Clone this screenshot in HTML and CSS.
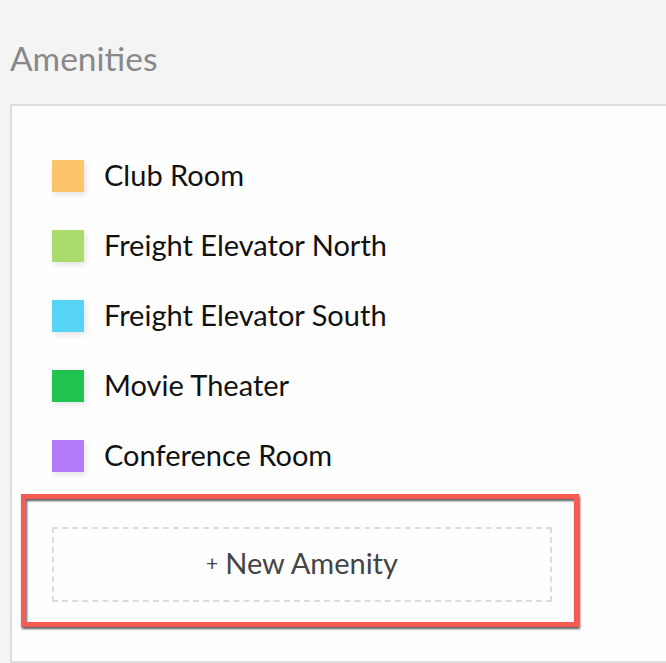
FILE: index.html
```html
<!DOCTYPE html>
<html>
<head>
<meta charset="utf-8">
<link rel="stylesheet" href="styles.css">
</head>
<body>
<div class="page">
  <h1 class="title">Amenities</h1>
  <div class="panel">
    <ul class="list">
      <li class="item"><span class="swatch swatch-orange"></span><span class="name">Club Room</span></li>
      <li class="item"><span class="swatch swatch-lime"></span><span class="name">Freight Elevator North</span></li>
      <li class="item"><span class="swatch swatch-sky"></span><span class="name">Freight Elevator South</span></li>
      <li class="item"><span class="swatch swatch-green"></span><span class="name">Movie Theater</span></li>
      <li class="item"><span class="swatch swatch-purple"></span><span class="name">Conference Room</span></li>
    </ul>
    <div class="add-wrap">
      <div class="add-btn"><span class="plus">+</span> New Amenity</div>
      <div class="highlight"></div>
    </div>
  </div>
</div>
</body>
</html>
```

FILE: styles.css
```css
html, body {
  margin: 0;
  padding: 0;
  height: 100%;
  overflow: hidden;
  background: #f4f4f4;
}
.page {
  padding-left: 10px;
  font-family: "Lato", "Open Sans", sans-serif;
}
.title {
  margin: 0;
  padding-top: 40px;
  height: 104px;
  box-sizing: border-box;
  font-weight: 400;
  font-size: 33.5px;
  line-height: 36px;
  color: #888888;
}
.panel {
  box-sizing: border-box;
  height: 559px;
  margin-right: -30px;
  background: #fefefe;
  border: 2px solid #dddddd;
  padding: 35px 40px 0 40px;
}
.list {
  list-style: none;
  margin: 0;
  padding: 0;
}
.item {
  display: flex;
  align-items: center;
  height: 70px;
}
.swatch {
  width: 32px;
  height: 32px;
  flex: none;
  box-shadow: 2px 3px 6px rgba(0, 0, 0, 0.1);
  margin-right: 20px;
}
.swatch-orange { background: #fec36d; }
.swatch-lime { background: #a9dc6d; }
.swatch-sky { background: #56d3f5; }
.swatch-green { background: #20c44f; }
.swatch-purple { background: #b47bf8; }
.name {
  font-size: 29px;
  color: #111111;
  padding-bottom: 4px;
}
.add-wrap {
  position: relative;
  margin-top: 36px;
  width: 500px;
}
.add-btn {
  box-sizing: border-box;
  height: 75px;
  padding-bottom: 5px;
  border: 2px dashed #dcdcdc;
  display: flex;
  align-items: center;
  justify-content: center;
  font-size: 29px;
  color: #444444;
}
.plus {
  font-size: 21px;
  margin-right: 7px;
}
.highlight {
  position: absolute;
  left: -31px;
  top: -33px;
  width: 558px;
  height: 133px;
  box-sizing: border-box;
  border: 5px solid #f75b51;
  filter: drop-shadow(1px 2px 1px rgba(0, 0, 0, 0.65));
}
```
